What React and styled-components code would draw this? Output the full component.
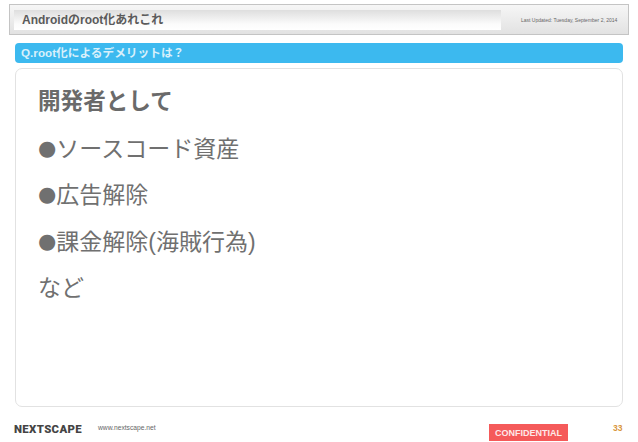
import React from "react";
import styled, { createGlobalStyle } from "styled-components";

const Global = createGlobalStyle`
  html, body { margin: 0; padding: 0; background: #fff; }
  body { font-family: "Liberation Sans", "Noto Sans CJK JP", sans-serif; }
`;

const Page = styled.div`
  width: 638px;
  height: 442px;
  overflow: hidden;
  display: flex;
  flex-direction: column;
  box-sizing: border-box;
  padding-top: 4px;
  color: #666;
`;

const Header = styled.header`
  margin-left: 9px;
  width: 620px;
  height: 31px;
  box-sizing: border-box;
  border: 1px solid #c4c4c4;
  background: linear-gradient(#f6f6f6, #e2e2e2);
  display: flex;
  align-items: center;
  padding-left: 4px;
`;

const TitleBox = styled.div`
  width: 487px;
  height: 20px;
  box-sizing: border-box;
  background: linear-gradient(#dedede, #fbfbfb 70%, #ffffff);
  padding-left: 8px;
  font-size: 12px;
  font-weight: 700;
  line-height: 20px;
  color: #5a5a5a;
  white-space: nowrap;
`;

const Updated = styled.div`
  margin-left: 20px;
  font-size: 5px;
  color: #666;
  white-space: nowrap;
`;

const Banner = styled.div`
  margin: 8px 0 0 15px;
  width: 608px;
  height: 20px;
  box-sizing: border-box;
  background: #3cb9ef;
  border-radius: 4px;
  padding-left: 6px;
  color: #d8f0fb;
  font-size: 11.7px;
  font-weight: 700;
  line-height: 20px;
  white-space: nowrap;
`;

const Card = styled.main`
  margin: 5px 0 0 15px;
  width: 608px;
  height: 339px;
  box-sizing: border-box;
  border: 1px solid #e2e2e2;
  border-radius: 7px;
  padding: 19px 0 0 22px;
  display: flex;
  flex-direction: column;
  gap: 18.5px;
`;

const Line = styled.div`
  font-size: ${(p) => (p.$bold ? "22.6px" : "23px")};
  line-height: 28px;
  height: 28px;
  font-weight: ${(p) => (p.$bold ? 700 : 400)};
  color: ${(p) => (p.$bold ? "#6a6a6a" : "#707070")};
  white-space: nowrap;
`;

const Bullet = styled.span`
  font-family: "DejaVu Sans", sans-serif;
  font-size: 21px;
  line-height: 1;
  vertical-align: 2px;
`;

const Footer = styled.footer`
  flex: 1;
  display: flex;
  align-items: flex-start;
  position: relative;
`;

const Logo = styled.div`
  margin: 15px 0 0 14px;
  width: 70px;
  font-family: "Roboto", sans-serif;
  font-weight: 900;
  font-size: 11.4px;
  line-height: 14px;
  letter-spacing: 0.35px;
  color: #444;
`;

const Site = styled.div`
  margin: 15px 0 0 14px;
  width: 391px;
  font-size: 6.7px;
  line-height: 11px;
  color: #666;
`;

const Confidential = styled.div`
  margin-top: 17px;
  width: 79px;
  height: 17px;
  background: #f55a5a;
  color: #fde9e9;
  font-size: 9px;
  font-weight: 700;
  line-height: 18px;
  text-align: center;
`;

const PageNo = styled.div`
  margin: 15px 0 0 45px;
  font-size: 8.5px;
  font-weight: 700;
  line-height: 12px;
  color: #d9963c;
`;

export default function App() {
  return (
    <Page>
      <Global />
      <Header>
        <TitleBox>Androidのroot化あれこれ</TitleBox>
        <Updated>Last Updated: Tuesday, September 2, 2014</Updated>
      </Header>
      <Banner>Q.root化によるデメリットは？</Banner>
      <Card>
        <Line $bold>開発者として</Line>
        <Line><Bullet>●</Bullet>ソースコード資産</Line>
        <Line><Bullet>●</Bullet>広告解除</Line>
        <Line><Bullet>●</Bullet>課金解除(海賊行為)</Line>
        <Line>など</Line>
      </Card>
      <Footer>
        <Logo>NEXTSCAPE</Logo>
        <Site>www.nextscape.net</Site>
        <Confidential>CONFIDENTIAL</Confidential>
        <PageNo>33</PageNo>
      </Footer>
    </Page>
  );
}
